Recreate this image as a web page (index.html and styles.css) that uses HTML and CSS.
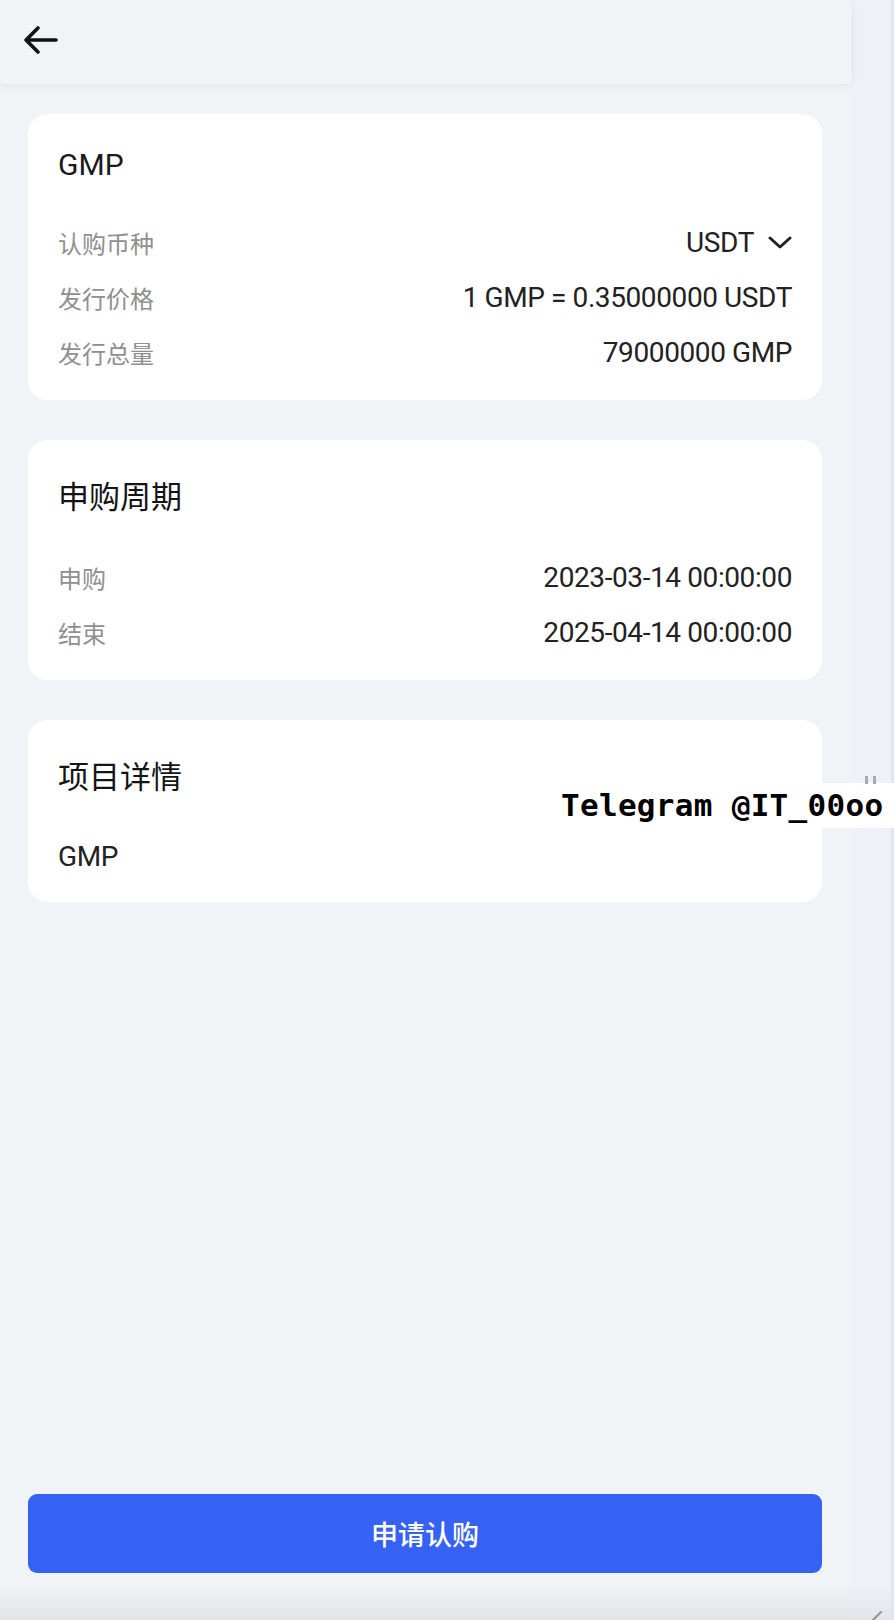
FILE: index.html
```html
<!DOCTYPE html>
<html lang="zh-CN">
<head>
<meta charset="utf-8">
<title>GMP</title>
<link rel="stylesheet" href="styles.css">
</head>
<body>
<div class="app">
  <header class="topbar">
    <svg class="back" width="36" height="32" viewBox="0 0 36 32" fill="none" stroke="#111" stroke-width="3.6" stroke-linecap="round" stroke-linejoin="round"><path d="M34 16 H4 M16 4 L4 16 L16 28"/></svg>
  </header>
  <main class="content">
    <section class="card">
      <h2 class="title latin">GMP</h2>
      <div class="row"><span class="label">认购币种</span><span class="value">USDT<svg class="chev" width="24" height="13" viewBox="0 0 24 13" fill="none" stroke="#222" stroke-width="3" stroke-linecap="round" stroke-linejoin="round"><path d="M2 2 L12 11 L22 2"/></svg></span></div>
      <div class="row"><span class="label">发行价格</span><span class="value">1 GMP = 0.35000000 USDT</span></div>
      <div class="row"><span class="label">发行总量</span><span class="value">79000000 GMP</span></div>
    </section>
    <section class="card">
      <h2 class="title">申购周期</h2>
      <div class="row"><span class="label">申购</span><span class="value">2023-03-14 00:00:00</span></div>
      <div class="row"><span class="label">结束</span><span class="value">2025-04-14 00:00:00</span></div>
    </section>
    <section class="card detail">
      <h2 class="title">项目详情</h2>
      <p class="desc">GMP</p>
    </section>
  </main>
  <footer class="footer">
    <button class="submit" type="button">申请认购</button>
  </footer>
</div>
<aside class="strip"></aside>
<div class="watermark">Telegram @IT_00oo</div>
<div class="pause"><i></i><i></i></div>
<svg class="grip" width="14" height="10" viewBox="0 0 14 10"><path d="M2 10 L11 1" stroke="#9a9a9a" stroke-width="2.4" stroke-linecap="round"/></svg>
</body>
</html>
```

FILE: styles.css
```css
* { box-sizing: border-box; }
html, body { margin: 0; padding: 0; }
body {
  width: 894px;
  height: 1620px;
  overflow: hidden;
  display: flex;
  position: relative;
  font-family: Roboto, "Noto Sans CJK SC", sans-serif;
  color: #222;
  background: linear-gradient(to bottom, #f1f4f6 0, #f1f4f6 1585px, #e1e4e8 1620px);
}
.app {
  width: 851px;
  height: 1620px;
  display: flex;
  flex-direction: column;
}
.topbar {
  height: 84px;
  flex: none;
  padding: 24px 0 0 22px;
  background: #f1f4f6;
  box-shadow: 0 3px 10px rgba(0, 0, 0, 0.05);
  position: relative;
  z-index: 1;
}
.back { display: block; }
.content {
  flex: 1;
  padding: 30px 29px 0 28px;
  display: flex;
  flex-direction: column;
  gap: 40px;
}
.card {
  background: #fff;
  border-radius: 20px;
  padding: 0 30px 20px;
}
.title {
  margin: 38px 0 32px;
  font-size: 31px;
  line-height: 40px;
  font-weight: 400;
  color: #141414;
}
.title.latin {
  margin: 31px 0 30px;
  font-size: 30px;
  color: #1b1b1b;
}
.row {
  height: 55px;
  display: flex;
  align-items: center;
  justify-content: space-between;
}
.label {
  font-size: 24px;
  color: #8f8f8f;
}
.value {
  font-size: 28px;
  letter-spacing: -0.4px;
  color: #222;
  display: flex;
  align-items: center;
  gap: 14px;
}
.chev { display: block; }
.detail { padding-bottom: 25px; }
.detail .title { margin-bottom: 39px; }
.desc {
  margin: 0;
  font-size: 28px;
  line-height: 40px;
  letter-spacing: -0.4px;
  color: #222;
}
.footer {
  flex: none;
  padding: 0 29px 47px 28px;
}
.submit {
  width: 100%;
  height: 79px;
  border: 0;
  border-radius: 9px;
  background: #3562f3;
  color: #fff;
  font-family: Roboto, "Noto Sans CJK SC", sans-serif;
  font-size: 27px;
  font-weight: 500;
}
.strip {
  width: 43px;
  height: 1620px;
  background: linear-gradient(to bottom, #eef2f8 0, #eef2f8 1585px, #e2e5ea 1620px);
  border-right: 3px solid #dfe6f1;
}
.watermark {
  position: absolute;
  left: 553px;
  top: 783px;
  width: 341px;
  height: 45px;
  padding-left: 8px;
  background: #fff;
  font-family: "DejaVu Sans Mono", monospace;
  font-weight: 700;
  font-size: 31px;
  line-height: 45px;
  letter-spacing: 0.3px;
  color: #000;
  white-space: nowrap;
}
.pause {
  position: absolute;
  left: 865px;
  top: 776px;
  display: flex;
  gap: 5px;
}
.pause i {
  display: block;
  width: 3px;
  height: 8px;
  background: #a9a9a9;
}
.grip {
  position: absolute;
  left: 870px;
  top: 1611px;
}
```
